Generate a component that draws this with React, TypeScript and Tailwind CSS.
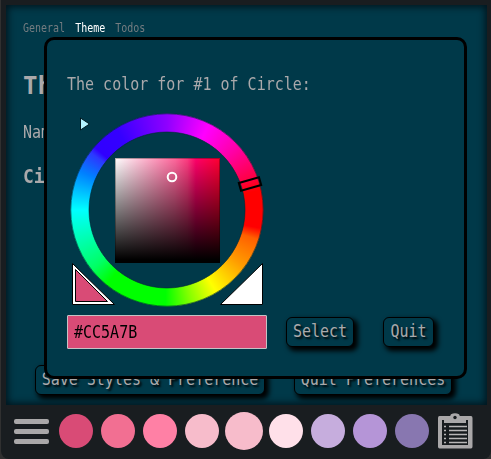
import React from "react";

const swatches = [
  "bg-[#d94b76]", "bg-[#f26f92]", "bg-[#ff80a5]", "bg-[#f7bccb]", "bg-[#f7bccb]",
  "bg-[#ffe0e9]", "bg-[#c6addd]", "bg-[#b595d7]", "bg-[#8877b0]",
];

function Button({ children, className }: { children: React.ReactNode; className: string }) {
  return (
    <button
      className={`flex h-[30px] items-center justify-center rounded-[6px] border border-black bg-[#003949] text-[15px] whitespace-nowrap text-[#aaa9ab] shadow-[3px_3px_5px_1px_#000] [text-shadow:2px_2px_2px_#000] ${className}`}
    >
      <span className="inline-block origin-center -translate-y-px scale-y-[1.14]">{children}</span>
    </button>
  );
}

function ColorWheel() {
  return (
    <div className="relative h-[194px] w-[194px]">
      <div className="absolute inset-0 rounded-full bg-[conic-gradient(#8f00ff_0deg,#ff00ff_26deg,#ff00a8_48deg,#ff0040_70deg,#ff0000_78deg,#ff0000_101deg,#ff6000_108deg,#ff9b00_126deg,#ffff00_149deg,#80ff00_166deg,#00ff00_181deg,#00ff00_219deg,#00ff66_232deg,#00ffff_270deg,#0080ff_294deg,#2c38ff_307deg,#3000ff_311deg,#3500ff_328deg,#8f00ff_360deg)] [mask-image:radial-gradient(circle,transparent_77.5px,black_78.5px,black_96px,transparent_97px)]" />
      <div className="absolute top-[45px] left-[45px] h-[105px] w-[105px] border border-black/30 bg-[linear-gradient(to_bottom,transparent,#000_97%),linear-gradient(to_right,#fff,#ff679c_57%,#ff3a80_69%,#ff0069_77%,#ff0030)] bg-origin-border" />
      <svg className="absolute inset-0" width="194" height="194" viewBox="0 0 194 194">
        <circle cx="97" cy="97" r="96.2" fill="none" stroke="#002a36" strokeOpacity=".6" />
        <circle cx="97" cy="97" r="78" fill="none" stroke="#002a36" strokeOpacity=".6" />
        <circle cx="102" cy="64" r="4.3" fill="none" stroke="#fff" strokeWidth="2" />
        <path d="M10.5 5v12l9-6z" fill="#b4f3ff" stroke="#00181f" />
        <rect x="169.5" y="67" width="21" height="8" fill="none" stroke="#000" strokeWidth="2" transform="rotate(-16 180 71)" />
        <path d="M2.5 150.5v41h42z" fill="#fff" stroke="#000" />
        <path d="M5.5 156.5v32h32z" fill="#d94b76" stroke="#000" />
        <path d="M192.5 150.5v41h-42z" fill="#fff" stroke="#000" />
      </svg>
    </div>
  );
}

function Clipboard() {
  return (
    <svg width="36" height="36" viewBox="0 0 36 36">
      <path d="M2 3H12.5C13.5 3 13.5 2 14 1.2Q18-.5 22 1.2C22.5 2 22.5 3 23.5 3H34Q35.5 3 35.5 5V33.5Q35.5 35.5 34 35.5H2.5Q1 35.5 1 33.5V5Q1 3 2.5 3Z" fill="#aaa8a9" />
      <path d="M5 7H7V10H29V7H31V32H5Z" fill="#171b1e" />
      <path d="M7 10V8.5Q8 7 12 7H24Q28 7 29 8.5V10Z" fill="#aaa8a9" />
      <circle cx="18" cy="4.5" r="1.7" fill="#171b1e" />
      <path d="M12 13.5H30M12 17.5H30M12 21.5H30M12 25.5H30M12 29.5H30M7 13.5H9M7 17.5H9M7 21.5H9M7 25.5H9M7 29.5H9" stroke="#b8b6b7" strokeWidth="1.5" />
    </svg>
  );
}

function ColorDialog() {
  return (
    <section className="absolute top-[32px] left-[38px] flex h-[342px] w-[423px] flex-col rounded-[10px] border-[3px] border-black bg-[#003949] pl-5">
      <p className="mt-[32px] h-[24px] origin-center scale-y-[1.14] text-[15px] leading-[24px] whitespace-pre text-[#aaa9ab]">
        The color for #1 of Circle:
      </p>
      <div className="mt-[17px] ml-[3px]">
        <ColorWheel />
      </div>
      <div className="mt-[8px] flex items-center">
        <div className="flex h-[34px] w-[200px] items-center rounded-[1px] border border-[#c5c2c5] bg-[#d94b76] pl-[6px] text-[15px] text-black">
          <span className="inline-block scale-y-[1.14]">#CC5A7B</span>
        </div>
        <Button className="ml-[19px] w-[68px]">Select</Button>
        <Button className="ml-[29px] w-[51px]">Quit</Button>
      </div>
    </section>
  );
}

export default function App() {
  return (
    <div className="h-[459px] w-[491px] overflow-hidden bg-[#303030] pl-px font-['DejaVu_Sans_Mono',monospace]">
      <div className="flex h-[459px] flex-col rounded-b-[8px] bg-[#191d20] pt-[5px] pr-[4px] pl-[5px]">
        <main className="relative h-[400px] w-[481px] shrink-0 bg-[#003949] pl-[17px] text-[#aaa9ab] shadow-[inset_0_0_7px_2px_#00151d]">
          <nav className="flex h-[46px] gap-[10px] pt-[16px] text-[10px] leading-[16px] text-[#737c80]">
            <span className="scale-y-[1.14] self-start">General</span>
            <span className="scale-y-[1.14] self-start text-white">Theme</span>
            <span className="scale-y-[1.14] self-start">Todos</span>
          </nav>
          <h1 className="mt-[17px] h-[36px] text-[24px] leading-[36px] font-bold">Theme</h1>
          <p className="mt-[16px] h-[24px] scale-y-[1.14] text-[15px] leading-[24px]">Name:</p>
          <h2 className="mt-[19px] h-[26px] scale-y-[1.1] text-[18px] leading-[26px] font-bold">Circle</h2>
          <div className="mt-[176px] ml-[12px] flex">
            <Button className="w-[230px]">Save Styles &amp; Preference</Button>
            <Button className="ml-[29px] w-[158px]">Quit Preferences</Button>
          </div>
          <ColorDialog />
        </main>
        <footer className="flex h-[54px] items-center pl-[8px]">
          <div className="mr-[6px] flex w-[35px] shrink-0 -translate-y-px flex-col gap-[5px]">
            <span className="h-[5px] rounded-[2px] bg-[#aaa8a9]" />
            <span className="h-[5px] rounded-[2px] bg-[#aaa8a9]" />
            <span className="h-[5px] rounded-[2px] bg-[#aaa8a9]" />
          </div>
          <div className="flex shrink-0 items-center">
            {swatches.map((color, i) => (
              <div key={i} className="flex w-[42px] -translate-y-px justify-center">
                <span className={`${color} ${i === 4 ? "size-[38px]" : "size-[34px]"} shrink-0 rounded-full`} />
              </div>
            ))}
          </div>
          <div className="ml-[4px] shrink-0 -translate-y-px">
            <Clipboard />
          </div>
        </footer>
      </div>
    </div>
  );
}
